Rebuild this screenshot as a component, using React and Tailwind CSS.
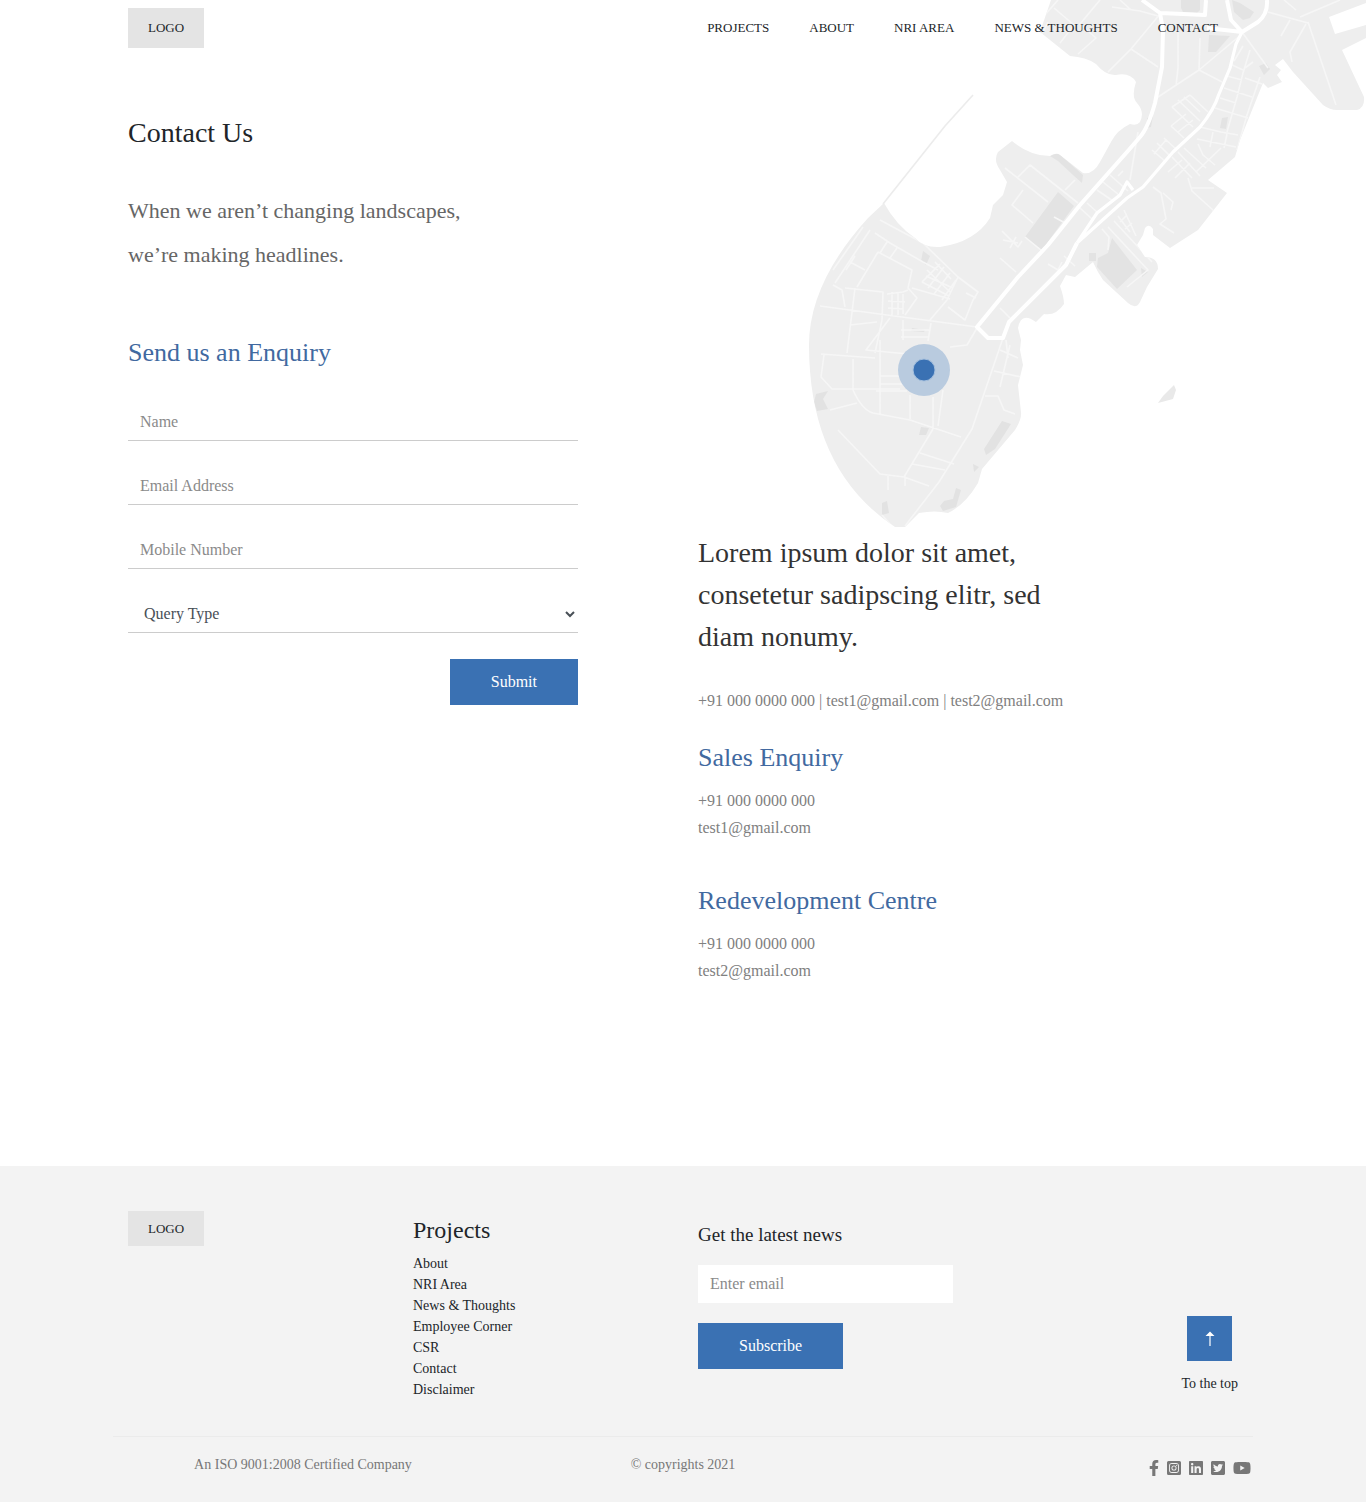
import React, { useState } from 'react';
import { FaFacebookF, FaInstagramSquare, FaLinkedin, FaTwitterSquare, FaYoutube } from 'react-icons/fa';

const navLinks = ['PROJECTS', 'ABOUT', 'NRI AREA', 'NEWS & THOUGHTS', 'CONTACT'];

const footerLinks = ['About', 'NRI Area', 'News & Thoughts', 'Employee Corner', 'CSR', 'Contact', 'Disclaimer'];

const fields = [
  { id: 'name', type: 'text', label: 'Name' },
  { id: 'email', type: 'email', label: 'Email Address' },
  { id: 'mobile', type: 'tel', label: 'Mobile Number' },
];

const departments = [
  { title: 'Sales Enquiry', phone: '+91 000 0000 000', email: 'test1@gmail.com' },
  { title: 'Redevelopment Centre', phone: '+91 000 0000 000', email: 'test2@gmail.com' },
];

const socials = [
  { label: 'Facebook', Icon: FaFacebookF, className: 'w-[10px] h-4' },
  { label: 'Instagram', Icon: FaInstagramSquare, className: 'w-[14px] h-4' },
  { label: 'LinkedIn', Icon: FaLinkedin, className: 'w-[14px] h-4' },
  { label: 'Twitter', Icon: FaTwitterSquare, className: 'w-[14px] h-4' },
  { label: 'YouTube', Icon: FaYoutube, className: 'w-[18px] h-4' },
];

const mainRoads =
  'M1142 0L1160 13L1183 14L1205 15L1206 0 M1160 13L1163 30L1162 67L1155 103Q1148 128 1140 137L1127 152L1080 205L1048 245L1018 277L977 327L988 338H1003L1009 322L1066 265L1077 243 M1242 32L1231 20L1227 0 M1242 32L1258 22Q1268 14 1267 0 M1242 32L1207 28';
const innerRoads =
  'M1077 243L1097 213L1120 195L1127 182L1133 190 M1077 243L1127 198L1143 187L1173 152L1200 127Q1214 110 1219 94L1230 68L1236 44L1242 32';

// side streets, north to south
const streets = [
  'M1058 0L1044 16 M1054 8L1074 25L1060 43 M1048 22L1042 34 M1100 0L1080 24L1096 38L1078 54 M1112 7L1140 11L1158 16 M1160 14L1131 49L1108 72 M1131 49L1158 67 M1120 0L1131 10',
  'M1178 30V68L1176 86 M1200 38L1199 70L1155 99 M1199 70L1222 82 M1199 70L1242 34 M1242 32L1268 68 M1268 12L1308 23 M1300 17L1340 0 M1308 22L1336 105 M1306 24L1290 52L1292 62 M1290 20L1281 36 M1284 0L1296 10',
  'M1250 50L1243 73L1237 97L1227 132 M1260 77L1247 115L1237 150 M1243 46L1234 61 M1253 62L1245 68 M1230 64L1243 70 M1227 76L1242 80 M1224 88L1252 97 M1220 98L1236 103 M1215 108L1248 118 M1262 84L1245 78',
  'M1172 107L1193 127 M1178 100L1200 121 M1190 95L1208 112 M1184 97L1200 112 M1172 107L1190 95 M1171 126L1184 138 M1171 126L1186 114 M1178 132L1193 120 M1152 150L1166 162 M1157 143L1170 156 M1164 138L1177 150 M1154 154L1166 140',
  'M1200 127L1221 132L1238 135 M1197 139L1236 147 M1198 144L1203 155L1215 165 M1178 152L1200 176 M1184 148L1206 168 M1172 157L1192 178 M1168 172L1182 160 M1175 178L1190 163 M1196 172L1221 148 M1213 132L1210 147 M1227 134L1224 148',
  'M1138 132L1130 180 M1110 175L1128 191 M1103 182L1119 195 M1097 190L1113 201 M1087 203L1098 213 M1080 208L1092 219 M1123 171L1118 176',
  'M1005 168L1048 202 M1017 178L1030 165L1078 203 M1023 190L1012 205L1033 223 M1025 237L1042 251 M1054 217L1067 224 M1002 231L1018 247L1022 241 M1010 248L1016 237 M1003 240L1018 243 M1000 258L1016 272 M1065 190L1075 180',
  'M1114 221L1152 262 M1108 227L1148 270L1127 287 M1118 216L1130 232 M1124 210L1136 236 M1120 222L1126 216 M1125 229L1132 223 M1153 187L1161 193L1166 219L1160 224L1174 233 M1163 193L1173 202L1171 210 M1188 178L1192 191L1214 211 M1192 188H1214 M1102 229L1109 237L1108 250',
  'M1048 264L1058 270L1062 262 M1064 256L1075 266 M1000 308L1010 318',
  'M880 220L923 243L958 277L947 300L930 320 M875 233L890 243L923 262L938 270 M878 252L912 270L908 288L917 298L905 315 M878 252L857 287 M887 242L880 253 M897 248L890 258 M870 230L835 283 M863 227L833 270 M850 262L865 270 M855 256L846 270',
  'M833 285L842 290L845 307 M845 288L883 292L882 320L875 353 M855 288L847 353 M820 306L887 315L977 327 M850 325L877 322 M887 294L903 292L908 290 M888 301L905 302 M888 308L903 309 M892 292V316 M898 292V315 M903 294V314',
  'M927 270L950 292 M935 262L951 279 M922 282L949 296 M926 276L953 288 M944 267L928 288 M950 273L934 294 M956 280L942 300 M940 264L922 282 M958 277L978 292L973 300L965 320L948 307 M966 293L976 298 M977 328L967 345L950 347 M912 288L950 299',
  'M903 320V340 M931 323L928 341 M901 330H929 M901 337H929 M890 318L866 350L908 354 M821 354L875 358 M824 355L821 377L832 389H900 M853 359V390Q862 410 873 413L910 420L961 437 M880 340V414 M880 376H900 M880 384H905 M876 391H907 M910 395V419 M933 397L933 429 M943 390L938 426 M830 410L857 403',
  'M1003 338L972 429L939 482L905 526 M1006 340L1008 358 M1000 350L1018 358 M994 371L1021 377 M1010 345L1000 387 M985 396H998L1004 410L1015 414',
  'M933 429L904 477L880 474L838 430 M920 453L954 464 M912 464L945 470 M904 477L929 486 M888 475V490 M905 476V486 M882 515L890 524',
].join(' ');

// parks and larger plots
const blocks =
  'M1181 0H1200V10L1197 13L1183 12L1181 8Z M1232 0L1240 3L1254 12L1250 18L1243 20L1234 12Z M1209 35L1230 36L1216 52H1208Z M1259 66L1266 63L1270 69L1264 75Z M1222 118L1228 117L1226 129L1220 128Z M1147 118L1153 116L1151 127L1147 128Z M1050 156L1058 153L1083 175L1082 183L1073 175L1058 161Z M1058 192L1074 206L1042 250L1025 237Z M1112 238L1137 270L1117 289L1097 267L1098 258L1108 253Z M1141 268L1148 272L1142 277Z M923 251L930 256L926 265L921 261Z M1089 253H1096V261H1089Z';
const blocksSouth =
  'M1002 421L1011 424L995 449L986 455L984 449Z M921 427L929 428L926 435H919Z M816 394L828 391L823 399L828 409L817 411L814 402Z M973 464L979 467L974 472Z M940 506L944 501L953 499L956 488L961 490L956 507L943 511Z M882 503L887 501L889 513L882 515Z M912 328L925 330L924 332L911 331Z';

function CoastMap() {
  return (
    <svg
      viewBox="808 0 558 530"
      className="absolute top-0 right-0 w-[558px] h-[530px]"
      role="img"
      aria-label="Office location"
    >
      <defs>
        <clipPath id="land">
          <path d="M1051 0L1040 32L1070 56Q1086 57 1096 64Q1106 76 1116 75Q1130 72 1136 82Q1131 97 1137 103Q1145 112 1140 122Q1137 126 1130 124Q1117 130 1111 142L1100 162Q1093 175 1083 173L1060 155Q1056 152 1050 156Q1030 156 1012 141L998 152Q993 160 1000 170L1007 182L1003 195L993 205L990 218Q975 242 940 247Q924 248 915 238Q896 225 884 203L868 218Q809 283 809 345Q809 470 895 527H905L919 513Q935 510 948 513Q965 505 978 483L982 469L1015 430Q1022 419 1021 412L1018 385L1023 365L1020 350L1021 340L1018 328Q1021 311 1036 322L1044 314Q1056 316 1064 304Q1064 297 1060 286L1066 275L1075 277L1093 262L1098 272L1103 280L1128 303Q1136 310 1140 302L1147 287L1158 269Q1158 257 1145 257L1137 245L1143 235L1145 228Q1149 223 1153 229L1153 235L1170 248L1198 230L1227 193L1208 180L1235 157L1240 140L1263 83L1268 88L1275 85L1282 82L1277 75L1281 70L1275 65L1283 59L1293 72L1323 105Q1330 110 1337 110H1357Q1365 108 1364 97L1342 50L1366 38V25L1335 34L1329 17L1366 3V0Z" />
        </clipPath>
      </defs>
      <g clipPath="url(#land)">
        <rect x="808" width="558" height="530" fill="#eeeeee" />
        <path d={blocks} fill="#e3e3e3" />
        <path d={blocksSouth} fill="#e2e2e2" />
        <path d={streets} fill="none" stroke="#f6f6f6" strokeWidth="1.6" strokeLinejoin="round" />
        <path d={innerRoads} fill="none" stroke="#ffffff" strokeWidth="3.2" strokeLinejoin="round" />
        <path d={mainRoads} fill="none" stroke="#ffffff" strokeWidth="4" strokeLinejoin="round" />
      </g>
      <path d="M973 95L945 126L914 165L883 204" fill="none" stroke="#ececec" strokeWidth="1.6" />
      <path d="M1158 403L1163 396L1174 385L1176 390L1173 399Z" fill="#e9e9e9" />
      <circle cx="924" cy="370" r="26" fill="#b9cbdf" />
      <circle cx="924" cy="370" r="11" fill="#3a71b3" stroke="#a4bfdd" strokeWidth="1" />
    </svg>
  );
}

function App() {
  const [form, setForm] = useState({ name: '', email: '', mobile: '', query: '' });
  const [newsEmail, setNewsEmail] = useState('');

  const handleChange = (e) => setForm({ ...form, [e.target.id]: e.target.value });

  return (
    <div className="relative min-h-screen overflow-hidden bg-white font-['Liberation_Serif',serif] text-[#212529]">
      <CoastMap />

      <header className="relative max-w-[1140px] mx-auto px-[15px] py-2 flex items-center justify-between text-[13px] leading-5">
        <a href="#home" className="bg-[#e4e4e4] px-5 py-[10px]">LOGO</a>
        <nav className="flex gap-10 px-5">
          {navLinks.map((link) => (
            <a key={link} href="#nav">{link}</a>
          ))}
        </nav>
      </header>

      <main className="relative max-w-[1140px] mx-auto px-[15px] pb-[182px] grid grid-cols-2 gap-[30px]">
        <section className="pt-14 max-w-[450px]">
          <h1 className="text-[28px] leading-[42px]">Contact Us</h1>
          <p className="mt-[35px] text-[22px] leading-[44px] text-[#666666]">
            When we aren’t changing landscapes,
            <br />
            we’re making headlines.
          </p>

          <h2 className="mt-14 text-[26px] leading-[39px] text-[#4169a0]">Send us an Enquiry</h2>
          <form className="mt-[31px]" onSubmit={(e) => e.preventDefault()}>
            <div className="flex flex-col gap-[26px]">
              {fields.map(({ id, type, label }) => (
                <input
                  key={id}
                  id={id}
                  type={type}
                  aria-label={label}
                  placeholder={label}
                  value={form[id]}
                  onChange={handleChange}
                  className="w-full h-[38px] px-3 text-base border-b border-[#cccccc] placeholder:text-[#8a8a8a] outline-none"
                />
              ))}
              <select
                id="query"
                aria-label="Query Type"
                value={form.query}
                onChange={handleChange}
                className="w-full h-[38px] pl-3 text-base bg-transparent border-b border-[#cccccc] text-[#495057] outline-none"
              >
                <option value="">Query Type</option>
                <option value="sales">Sales Enquiry</option>
                <option value="redevelopment">Redevelopment Centre</option>
              </select>
            </div>
            <div className="mt-[26px] flex justify-end">
              <button type="submit" className="px-[41px] py-[11px] text-base bg-[#3a71b3] text-white">Submit</button>
            </div>
          </form>
        </section>

        <section className="pt-[476px]">
          <h2 className="max-w-[380px] text-[28px] leading-[42px] text-[#333333]">
            Lorem ipsum dolor sit amet, consetetur sadipscing elitr, sed diam nonumy.
          </h2>
          <p className="mt-[29px] text-base leading-[27px] text-[#808080]">
            +91 000 0000 000 | <a href="mailto:test1@gmail.com">test1@gmail.com</a> |{' '}
            <a href="mailto:test2@gmail.com">test2@gmail.com</a>
          </p>
          <div className="mt-6 flex flex-col gap-10">
            {departments.map(({ title, phone, email }) => (
              <div key={title}>
                <h3 className="text-[26px] leading-[39px] text-[#4169a0]">{title}</h3>
                <div className="mt-[10px] flex flex-col text-base leading-[27px] text-[#808080]">
                  <span>{phone}</span>
                  <a href={`mailto:${email}`}>{email}</a>
                </div>
              </div>
            ))}
          </div>
        </section>
      </main>

      <footer className="bg-[#f3f3f3]">
        <div className="max-w-[1140px] mx-auto">
          <div className="px-[15px] pt-[45px] pb-9 grid grid-cols-4 gap-[30px]">
            <div>
              <a href="#home" className="inline-block bg-[#e4e4e4] px-5 py-2 text-[13px] leading-[19px]">LOGO</a>
            </div>

            <div>
              <h4 className="text-2xl leading-[38px]">Projects</h4>
              <ul className="mt-1 text-sm leading-[21px]">
                {footerLinks.map((link) => (
                  <li key={link}><a href="#footer">{link}</a></li>
                ))}
              </ul>
            </div>

            <form className="pt-[10px] flex flex-col items-start" onSubmit={(e) => e.preventDefault()}>
              <label htmlFor="news" className="text-[19px] leading-7">Get the latest news</label>
              <input
                id="news"
                type="email"
                placeholder="Enter email"
                value={newsEmail}
                onChange={(e) => setNewsEmail(e.target.value)}
                className="mt-4 w-full h-[38px] px-3 text-base bg-white placeholder:text-[#8a8a8a] outline-none"
              />
              <button type="submit" className="mt-5 px-[41px] py-[11px] text-base bg-[#3a71b3] text-white">
                Subscribe
              </button>
            </form>

            <div className="flex flex-col items-end justify-end pb-[6px]">
              <button
                type="button"
                className="flex flex-col items-center gap-3 text-sm leading-[21px]"
                onClick={() => window.scrollTo(0, 0)}
              >
                <span className="w-[45px] h-[45px] bg-[#3a71b3] flex items-center justify-center">
                  <svg viewBox="0 0 10 16" className="w-[10px] h-4" fill="white">
                    <path d="M5 0.5L9.5 5H5.6V15H4.4V5H0.5Z" />
                  </svg>
                </span>
                To the top
              </button>
            </div>
          </div>

          <div className="border-t border-[#ebebeb] pt-[17px] pb-[27px] grid grid-cols-3 items-start text-sm leading-[21px] text-[#777777]">
            <p className="text-center">An ISO 9001:2008 Certified Company</p>
            <p className="text-center">© copyrights 2021</p>
            <div className="pt-[6px] pr-[2px] flex justify-end gap-2">
              {socials.map(({ label, Icon, className }) => (
                <a key={label} href="#social" aria-label={label}>
                  <Icon className={className} />
                </a>
              ))}
            </div>
          </div>
        </div>
      </footer>
    </div>
  );
}

export default App;
